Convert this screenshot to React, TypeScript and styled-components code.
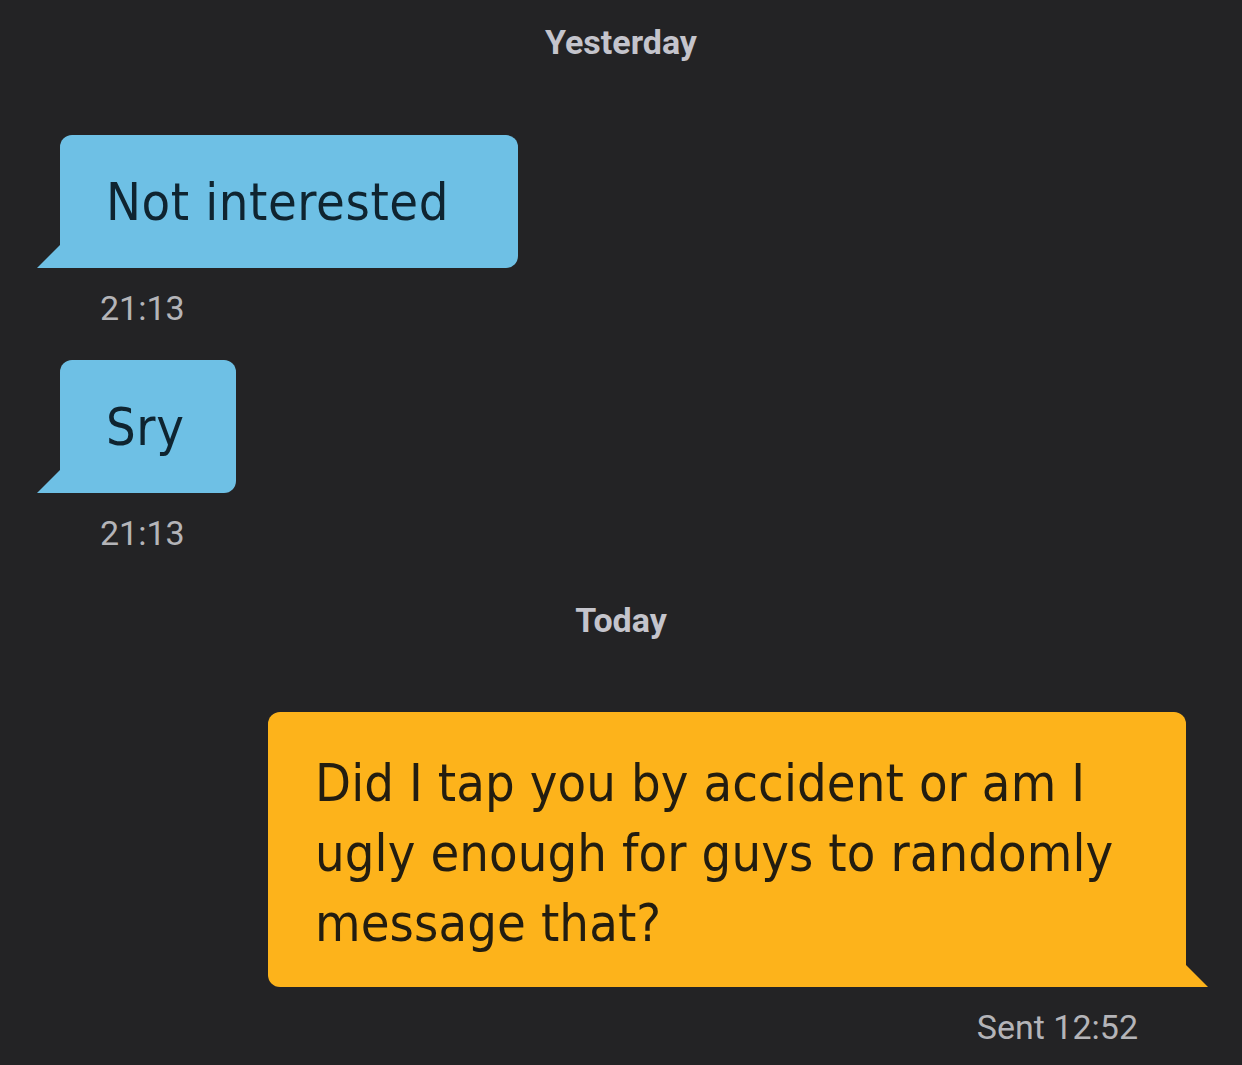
import React from 'react'
import styled, { createGlobalStyle } from 'styled-components'

const GlobalStyle = createGlobalStyle`
  html, body {
    margin: 0;
    padding: 0;
    background: #232325;
  }
  body {
    width: 1242px;
    height: 1065px;
    overflow: hidden;
  }
`

const ChatScreen = styled.div`
  display: flex;
  flex-direction: column;
  width: 1242px;
  height: 1065px;
  background: #232325;
`

const DayLabel = styled.div<{ $top: number }>`
  margin-top: ${(p) => p.$top}px;
  text-align: center;
  font-family: 'Roboto', 'Liberation Sans', sans-serif;
  font-weight: 700;
  font-size: 34px;
  line-height: 40px;
  color: #c4c4cc;
`

const MessageRow = styled.div<{ $out?: boolean; $top: number }>`
  display: flex;
  flex-direction: column;
  align-items: ${(p) => (p.$out ? 'flex-end' : 'flex-start')};
  margin-top: ${(p) => p.$top}px;
  padding: ${(p) => (p.$out ? '0 56px 0 0' : '0 0 0 60px')};
`

const Bubble = styled.div<{ $out?: boolean }>`
  position: relative;
  box-sizing: border-box;
  background: ${(p) => (p.$out ? '#fdb31b' : '#6ec0e5')};
  color: ${(p) => (p.$out ? '#231d10' : '#0f2430')};
  border-radius: ${(p) => (p.$out ? '12px 12px 0 12px' : '12px 12px 12px 0')};
  font-family: 'DejaVu Sans Condensed', 'DejaVu Sans', sans-serif;
  font-stretch: condensed;
  font-size: 52px;
  line-height: 70px;
  &::before {
    content: '';
    position: absolute;
    bottom: 0;
    width: 24px;
    height: 24px;
    background: inherit;
    ${(p) =>
      p.$out
        ? 'right: -22px; clip-path: polygon(0 0, 100% 100%, 0 100%);'
        : 'left: -23px; clip-path: polygon(100% 0, 100% 100%, 0 100%);'}
  }
`

const InBubble = styled(Bubble)<{ $width: number }>`
  width: ${(p) => p.$width}px;
  height: 133px;
  display: flex;
  align-items: center;
  padding: 0 0 0 46px;
  letter-spacing: 0.6px;
`

const OutBubble = styled(Bubble)`
  width: 918px;
  height: 275px;
  padding: 36px 40px 0 47px;
  letter-spacing: 0.1px;
`

const TimeStamp = styled.div<{ $out?: boolean }>`
  margin-top: 20px;
  margin-left: ${(p) => (p.$out ? '0' : '40px')};
  margin-right: ${(p) => (p.$out ? '48px' : '0')};
  font-family: 'Roboto', 'Liberation Sans', sans-serif;
  font-size: 34px;
  line-height: 40px;
  color: #b4b4b8;
`

const App = (): React.ReactElement => {
  return (
    <ChatScreen>
      <GlobalStyle />
      <DayLabel $top={22}>Yesterday</DayLabel>
      <MessageRow $top={73}>
        <InBubble $width={458}>Not interested</InBubble>
        <TimeStamp>21:13</TimeStamp>
      </MessageRow>
      <MessageRow $top={32}>
        <InBubble $width={176}>Sry</InBubble>
        <TimeStamp>21:13</TimeStamp>
      </MessageRow>
      <DayLabel $top={47}>Today</DayLabel>
      <MessageRow $out $top={72}>
        <OutBubble $out>
          Did I tap you by accident or am I ugly enough for guys to randomly message that?
        </OutBubble>
        <TimeStamp $out>Sent 12:52</TimeStamp>
      </MessageRow>
    </ChatScreen>
  )
}

export default App
